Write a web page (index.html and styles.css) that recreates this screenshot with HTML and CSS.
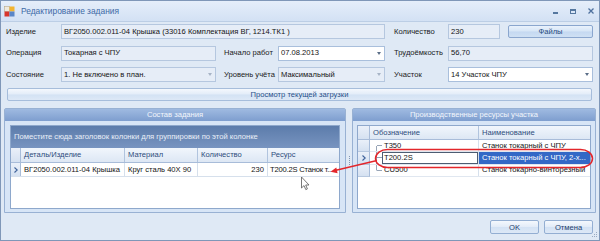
FILE: index.html
```html
<!DOCTYPE html>
<html lang="ru">
<head>
<meta charset="utf-8">
<title>Редактирование задания</title>
<link rel="stylesheet" href="styles.css">
</head>
<body>
<div class="window">
  <div class="titlebar">
    <svg class="app-icon" width="11" height="11" viewBox="0 0 11 11">
      <rect x="0.5" y="0.5" width="5" height="5" fill="#efe9dc" stroke="#b8a889" stroke-width="0.6"/>
      <rect x="5.5" y="0.5" width="5" height="5" fill="#f2b430"/>
      <rect x="0.5" y="5.5" width="5" height="5" fill="#d8362c"/>
      <rect x="5.5" y="5.5" width="5" height="5" fill="#5a86c8"/>
    </svg>
    <span class="title">Редактирование задания</span>
    <div class="controls">
      <span class="ctl-min"></span>
      <span class="ctl-max"></span>
      <svg class="ctl-close" width="6" height="6" viewBox="0 0 6 6"><path d="M0.5 0.5L5.5 5.5M5.5 0.5L0.5 5.5" stroke="#4f719e" stroke-width="1.3"/></svg>
    </div>
  </div>

  <div class="client">
    <div class="form">
      <span class="lbl c1">Изделие</span>
      <div class="field c2-5">ВГ2050.002.011-04 Крышка (33016 Комплектация ВГ, 1214.ТК1 )</div>
      <span class="lbl c7">Количество</span>
      <div class="field c8">230</div>
      <button class="btn files c10">Файлы</button>

      <span class="lbl c1">Операция</span>
      <div class="field c2">Токарная с ЧПУ</div>
      <span class="lbl c4">Начало работ</span>
      <div class="field white combo c5">07.08.2013<span class="arrow"></span></div>
      <span class="lbl c7">Трудоёмкость</span>
      <div class="field c8-10">56,70</div>

      <span class="lbl c1">Состояние</span>
      <div class="field combo disabled c2">1. Не включено в план.<span class="arrow"></span></div>
      <span class="lbl c4">Уровень учёта</span>
      <div class="field combo disabled c5">Максимальный<span class="arrow"></span></div>
      <span class="lbl c7">Участок</span>
      <div class="field white combo c8-10">14 Участок ЧПУ<span class="arrow"></span></div>
    </div>

    <button class="btn wide">Просмотр текущей загрузки</button>

    <div class="panels">
      <div class="panel left">
        <div class="panel-head">Состав задания</div>
        <div class="panel-body">
          <div class="grid">
            <div class="group-band">Поместите сюда заголовок колонки для группировки по этой колонке</div>
            <div class="hrow">
              <div class="cell ind w-ind-l"></div>
              <div class="cell w-det">Деталь/Изделие</div>
              <div class="cell w-mat">Материал</div>
              <div class="cell w-qty">Количество</div>
              <div class="cell w-res">Ресурс</div>
            </div>
            <div class="drow">
              <div class="cell ind w-ind-l"><svg class="chev" width="4" height="6" viewBox="0 0 4 6"><path d="M0.5 0.5L3.2 3L0.5 5.5" fill="none" stroke="#3f629a" stroke-width="1.1"/></svg></div>
              <div class="cell w-det">ВГ2050.002.011-04 Крышка</div>
              <div class="cell w-mat">Круг сталь 40Х 90</div>
              <div class="cell w-qty num">230</div>
              <div class="cell w-res tight">Т200.2S Станок т..</div>
            </div>
          </div>
        </div>
      </div>

      <div class="splitter"><span class="grip"></span></div>

      <div class="panel right">
        <div class="panel-head">Производственные ресурсы участка</div>
        <div class="panel-body">
          <div class="grid">
            <div class="hrow rh">
              <div class="cell ind w-ind-r"></div>
              <div class="cell w-code">Обозначение</div>
              <div class="cell w-name">Наименование</div>
            </div>
            <div class="rrow">
              <div class="cell ind w-ind-r"></div>
              <div class="cell tcell w-code"><span class="branch first"></span><span class="ttext">T350</span></div>
              <div class="cell w-name">Станок токарный с ЧПУ</div>
            </div>
            <div class="rrow">
              <div class="cell ind w-ind-r"><svg class="chev" width="4" height="6" viewBox="0 0 4 6"><path d="M0.5 0.5L3.2 3L0.5 5.5" fill="none" stroke="#3f629a" stroke-width="1.1"/></svg></div>
              <div class="cell tcell w-code"><span class="branch mid"></span><span class="edit">T200.2S</span></div>
              <div class="cell w-name sel">Станок токарный с ЧПУ, 2-х...</div>
            </div>
            <div class="rrow">
              <div class="cell ind w-ind-r"></div>
              <div class="cell tcell w-code"><span class="branch last"></span><span class="ttext">CU500</span></div>
              <div class="cell w-name">Станок токарно-винторезный</div>
            </div>
          </div>
        </div>
      </div>
    </div>

    <div class="footer">
      <button class="btn foot">OK</button>
      <button class="btn foot">Отмена</button>
    </div>
  </div>

  <svg class="overlay" width="600" height="241" viewBox="0 0 600 241">
    <rect x="375.5" y="149.5" width="217" height="18" rx="12" ry="9" fill="none" stroke="#e3262b" stroke-width="1.5"/>
    <line x1="377" y1="160.5" x2="336" y2="170.3" stroke="#e3262b" stroke-width="1.4"/>
    <polygon points="330.5,171.8 337.6,173.3 336.3,167.4" fill="#e3262b"/>
    <path d="M301.5 177 L301.5 188 L304 185.6 L305.8 189.6 L307.4 188.9 L305.7 185 L309 185 Z" fill="#fff" stroke="#555" stroke-width="0.8" stroke-linejoin="round"/>
    <g fill="#9aabc2">
      <rect x="596" y="232" width="1" height="1"/>
      <rect x="594" y="234" width="1" height="1"/><rect x="596" y="234" width="1" height="1"/>
      <rect x="592" y="236" width="1" height="1"/><rect x="594" y="236" width="1" height="1"/><rect x="596" y="236" width="1" height="1"/>
    </g>
  </svg>
</div>
</body>
</html>
```

FILE: styles.css
```css
* { box-sizing: border-box; margin: 0; padding: 0; }
html, body { width: 600px; height: 241px; overflow: hidden; background: #fff; }
body {
  font-family: "Liberation Sans", Arial, sans-serif;
  font-size: 7.6px;
  line-height: 1;
  color: #141414;
}

.window {
  position: relative;
  width: 600px;
  height: 241px;
  border: 1px solid #7f97b8;
  background: #dfe9f5;
  display: flex;
  flex-direction: column;
}

/* title bar */
.titlebar {
  flex: 0 0 21px;
  display: flex;
  align-items: center;
  padding-left: 3px;
  background: linear-gradient(#e5eefa, #d3e1f4);
  border-bottom: 1px solid #bccee5;
}
.app-icon { flex: none; margin-right: 6px; display: block; }
.title { font-size: 8.4px; color: #3d69a6; }
.controls { margin-left: auto; display: flex; align-items: center; gap: 12px; padding-right: 5px; }
.ctl-min { width: 5px; height: 2px; background: #55779f; margin-top: 4px; }
.ctl-max { width: 6px; height: 5px; border: 1px solid #55779f; border-top-width: 2px; }
.ctl-close { display: block; }

/* client area */
.client { flex: 1; display: flex; flex-direction: column; padding: 2px 6px 0 5px; }

.form {
  display: grid;
  grid-template-columns: 55px 155px 8px 54px 107px 9px 54px 52px 8px 85px;
  grid-auto-rows: 15px;
  row-gap: 6.5px;
}
.c1 { grid-column: 1; }
.c2 { grid-column: 2; }
.c2-5 { grid-column: 2 / 6; }
.c4 { grid-column: 4; }
.c5 { grid-column: 5; }
.c7 { grid-column: 7; }
.c8 { grid-column: 8; }
.c8-10 { grid-column: 8 / 11; }
.c10 { grid-column: 10; }

.lbl { display: flex; align-items: center; white-space: nowrap; color: #1a1a1a; }
.field {
  display: flex;
  align-items: center;
  padding: 0 2px;
  border: 1px solid #b5c7df;
  background: #e6edf7;
  white-space: nowrap;
  overflow: hidden;
  color: #141414;
}
.field.white { background: #fff; border-color: #a9bfdc; }
.combo .arrow {
  margin-left: auto;
  margin-right: 1px;
  width: 0; height: 0;
  border-left: 2.5px solid transparent;
  border-right: 2.5px solid transparent;
  border-top: 3px solid #5b6e88;
}
.combo.disabled .arrow { border-top-color: #a7b4c6; }

.btn {
  font-family: inherit;
  font-size: inherit;
  display: flex;
  align-items: center;
  justify-content: center;
  border: 1px solid #93aed2;
  border-radius: 2px;
  background: linear-gradient(#f4f8fd 0%, #e3ecf8 48%, #d3e2f4 52%, #dde8f6 100%);
  color: #1f3f6d;
}
.files {
  background: linear-gradient(#e9f2fc 0%, #d6e5f6 48%, #c4d8f1 52%, #cfe0f4 100%);
  border-color: #8aa6ce;
  color: #2a4c7e;
  margin-top: 1px;
  height: 13px;
}
.wide { height: 13px; width: 585px; margin: 6px 0 0 1px; color: #28508a; border-color: #a6bddb; }

/* panels */
.panels { display: flex; height: 105px; margin: 7px 0 0 -2px; }
.panel {
  display: flex;
  flex-direction: column;
  border: 1px solid #98b1d3;
  background: #d7e5f6;
  border-radius: 2px 2px 0 0;
}
.panel.left { width: 342px; }
.panel.right { width: 244px; }
.panel-head {
  flex: 0 0 12px;
  display: flex;
  align-items: center;
  justify-content: center;
  background: linear-gradient(#9fbae1, #7e9ecf);
  color: #f2f6fc;
}
.panel-body { flex: 1; display: flex; padding: 4px 5px 3px; }
.right .panel-body { padding: 4px 4px 3px; }

.grid {
  flex: 1;
  display: flex;
  flex-direction: column;
  border: 1px solid #8ea8cc;
  background: #fff;
  overflow: hidden;
}
.group-band {
  flex: 0 0 22px;
  display: flex;
  align-items: center;
  padding-left: 3px;
  color: #e9eff8;
  background: linear-gradient(#5c7cab, #7894c0);
  white-space: nowrap;
}

.hrow, .drow, .rrow { display: flex; flex: none; }
.hrow {
  height: 15px;
  background: linear-gradient(#f1f6fc, #dde7f4);
  border-bottom: 1px solid #a8bcd9;
  color: #2d4c7b;
}
.hrow.rh { height: 14px; }
.drow { height: 14px; border-bottom: 1px solid #d6e0ec; }
.rrow { height: 12.3px; border-bottom: 1px solid #e0e7f0; }

.cell {
  flex: none;
  display: flex;
  align-items: center;
  padding-left: 3px;
  border-right: 1px solid #d6e0ec;
  white-space: nowrap;
  overflow: hidden;
}
.hrow .cell { border-right-color: #b1c4de; }
.cell.ind {
  padding-left: 0;
  justify-content: center;
  background: linear-gradient(#eaf0f9, #d5e1f1);
  border-right-color: #a8bcd9;
}
.rrow .cell.ind { border-bottom: 1px solid #b7c8df; margin-bottom: -1px; }
.chev { display: block; }
.num { justify-content: flex-end; padding-right: 3px; padding-left: 0; }
.tight { letter-spacing: -0.2px; padding-left: 2px; }

.w-ind-l { width: 10px; }
.w-det { width: 104px; }
.w-mat { width: 73px; }
.w-qty { width: 70px; }
.w-res { width: 71px; border-right: none; }

.w-ind-r { width: 12px; }
.w-code { width: 109px; }
.w-name { width: 111px; border-right: none; }

.tcell { padding-left: 6px; align-items: stretch; }
.branch {
  flex: none;
  width: 6px;
  background-image: linear-gradient(#98a5b7, #98a5b7), linear-gradient(#98a5b7, #98a5b7);
  background-repeat: no-repeat;
  background-size: 1px 100%, 5px 1px;
  background-position: 0 0, 1px 50%;
}
.branch.first { background-size: 1px 50%, 5px 1px; background-position: 0 100%, 1px 50%; }
.branch.last { background-size: 1px 50%, 5px 1px; background-position: 0 0, 1px 50%; }
.ttext { display: flex; align-items: center; padding-left: 2px; }
.edit {
  flex: 1;
  display: flex;
  align-items: center;
  padding-left: 1px;
  background: #fff;
  border: 1px solid #4c5c72;
}
.sel { background: #3368c6; color: #fff; }

.splitter { flex: 0 0 6px; display: flex; align-items: center; justify-content: center; }
.grip {
  width: 1px;
  height: 10px;
  background: repeating-linear-gradient(#7f95b5 0 1px, transparent 1px 2px);
}

/* footer */
.footer { display: flex; justify-content: flex-end; gap: 5px; margin-top: 7px; }
.foot { width: 49px; height: 14px; }

.overlay { position: absolute; left: -1px; top: -1px; pointer-events: none; }
```
